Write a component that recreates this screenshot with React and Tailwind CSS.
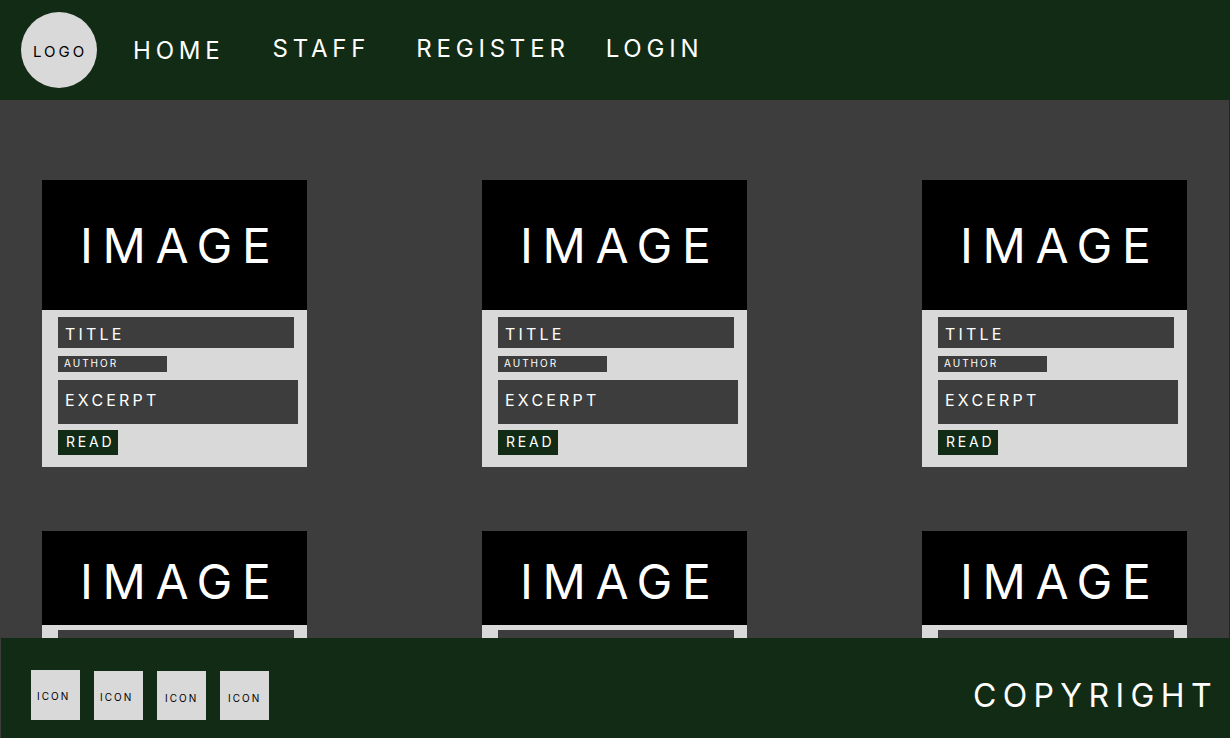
const links = [
  { label: "HOME", place: "pt-1 pr-12" },
  { label: "STAFF", place: "pr-[46px]" },
  { label: "REGISTER", place: "pr-9" },
  { label: "LOGIN", place: "" },
];

const icons = [
  { id: 1, box: "h-[50px] pl-1.5 pt-0.5" },
  { id: 2, box: "h-[49px] pl-1.5 pt-0.5" },
  { id: 3, box: "h-[49px] pl-2 pt-1" },
  { id: 4, box: "h-[49px] pl-2 pt-1" },
];

function Card({ short }) {
  return (
    <article className="w-[265px] shrink-0 bg-[#d9d9d9] text-white">
      <div
        className={
          short
            ? "flex h-[94px] items-center bg-black pl-[38px] pt-2"
            : "flex h-[130px] items-center bg-black pl-[38px] pt-0.5"
        }
      >
        <span className="text-[48px] leading-[60px] tracking-[0.2em]">IMAGE</span>
      </div>
      <div className={short ? "pb-3 pl-4 pt-[5px]" : "pb-3 pl-4 pt-[7px]"}>
        <h2 className="mr-[13px] flex h-[31px] items-center bg-[#3d3d3d] pl-[7px] pt-0.5 text-base leading-5 tracking-[0.2em]">
          TITLE
        </h2>
        <p className="mt-2 flex h-4 w-[109px] items-center bg-[#3d3d3d] pb-0.5 pl-1.5 text-[10px] leading-3.5 tracking-[0.2em]">
          AUTHOR
        </p>
        <p className="mr-[9px] mt-2 flex h-11 items-center bg-[#3d3d3d] pb-1 pl-[7px] text-base leading-5 tracking-[0.2em]">
          EXCERPT
        </p>
        <button
          type="button"
          className="mt-1.5 flex h-[25px] w-[60px] items-center bg-[#122b14] pb-0.5 pl-2 text-sm leading-5 tracking-[0.2em]"
        >
          READ
        </button>
      </div>
    </article>
  );
}

export default function App() {
  return (
    <div className="flex h-screen flex-col overflow-hidden bg-[#3d3d3d] font-['Inter',sans-serif]">
      <header className="flex h-[100px] shrink-0 items-center bg-[#122b14] pl-[21px]">
        <a
          href="#"
          className="flex size-[76px] items-center rounded-full bg-[#d9d9d9] pl-3 pt-1 text-[15px] leading-5 tracking-[0.2em] text-black"
        >
          LOGO
        </a>
        <nav className="flex items-center pb-0.5 pl-9 text-2xl tracking-[0.2em] text-white">
          {links.map((link) => (
            <a key={link.label} href="#" className={link.place}>
              {link.label}
            </a>
          ))}
        </nav>
      </header>

      <main className="flex min-h-0 flex-1 flex-col gap-16 overflow-hidden border-r border-[#222222] px-[42px] pt-20">
        <section className="flex justify-between">
          <Card />
          <Card />
          <Card />
        </section>
        <section className="flex justify-between">
          <Card short />
          <Card short />
          <Card short />
        </section>
      </main>

      <footer className="ml-px flex h-[100px] shrink-0 items-center justify-between bg-[#122b14] pl-[30px] pr-3">
        <ul className="flex items-end gap-3.5 pt-3.5">
          {icons.map((icon) => (
            <li key={icon.id}>
              <a
                href="#"
                className={`flex w-[49px] items-center bg-[#d9d9d9] text-[10px] leading-4 tracking-[0.2em] text-black ${icon.box}`}
              >
                ICON
              </a>
            </li>
          ))}
        </ul>
        <p className="pt-4 text-[32px] leading-10 tracking-[0.2em] text-white">COPYRIGHT</p>
      </footer>
    </div>
  );
}
